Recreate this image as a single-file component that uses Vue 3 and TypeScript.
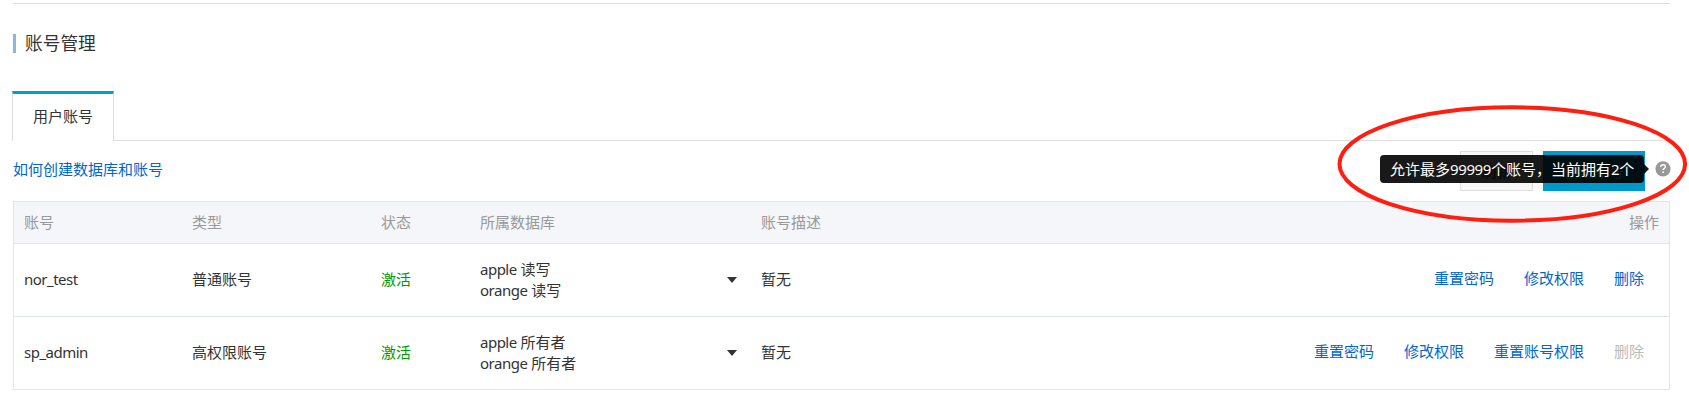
<script setup lang="ts">
interface Grant { db: string; role: string }
interface Action { label: string; disabled?: boolean }
interface Account {
  name: string
  type: string
  status: string
  grants: Grant[]
  note: string
  actions: Action[]
}

const headers: string[] = ['账号', '类型', '状态', '所属数据库', '账号描述', '操作']

const accounts: Account[] = [
  {
    name: 'nor_test',
    type: '普通账号',
    status: '激活',
    grants: [{ db: 'apple', role: '读写' }, { db: 'orange', role: '读写' }],
    note: '暂无',
    actions: [{ label: '重置密码' }, { label: '修改权限' }, { label: '删除' }],
  },
  {
    name: 'sp_admin',
    type: '高权限账号',
    status: '激活',
    grants: [{ db: 'apple', role: '所有者' }, { db: 'orange', role: '所有者' }],
    note: '暂无',
    actions: [
      { label: '重置密码' },
      { label: '修改权限' },
      { label: '重置账号权限' },
      { label: '删除', disabled: true },
    ],
  },
]
</script>

<template>
  <main class="page">
    <header class="title-row">
      <h1 class="title">账号管理</h1>
    </header>

    <nav class="tabs">
      <div class="tab">用户账号</div>
      <div class="tab-rest"></div>
    </nav>

    <section class="toolbar">
      <a class="link">如何创建数据库和账号</a>
      <div class="tools">
        <button class="btn">刷新</button>
        <button class="btn primary">创建账号</button>
        <div class="help">
          <svg class="help-icon" width="16" height="16" viewBox="0 0 16 16">
            <circle cx="8" cy="7.8" r="7.6" fill="#999" />
            <path d="M5.7 6.1C5.7 4.6 6.7 3.8 8.1 3.8C9.5 3.8 10.4 4.6 10.4 5.7C10.4 7.3 8.1 7.3 8.1 9.1" fill="none" stroke="#fff" stroke-width="1.5" />
            <rect x="7.3" y="10.4" width="1.6" height="1.6" fill="#fff" />
          </svg>
          <div class="tooltip">允许最多<span class="digits">99999</span>个账号，当前拥有<span class="digits">2</span>个</div>
        </div>
      </div>
    </section>

    <section class="table">
      <div class="row head">
        <span v-for="h in headers" :key="h" class="cell">{{ h }}</span>
      </div>
      <div v-for="a in accounts" :key="a.name" class="row">
        <span class="cell latin">{{ a.name }}</span>
        <span class="cell">{{ a.type }}</span>
        <span class="cell active">{{ a.status }}</span>
        <div class="cell dbs">
          <div>
            <div v-for="g in a.grants" :key="g.db" class="grant"><span class="latin">{{ g.db }}</span>{{ ' ' + g.role }}</div>
          </div>
          <i class="caret"></i>
        </div>
        <span class="cell">{{ a.note }}</span>
        <div class="actions">
          <a v-for="x in a.actions" :key="x.label" class="link" :class="{ disabled: x.disabled }">{{ x.label }}</a>
        </div>
      </div>
    </section>

    <svg class="marker" width="352" height="120" viewBox="0 0 352 120">
      <ellipse cx="176.3" cy="60" rx="172.8" ry="56.7" fill="none" stroke="#ff1e10" stroke-width="4" />
    </svg>
  </main>
</template>

<style>
body { margin: 0; background: #fff; }
</style>

<style scoped>
.page {
  position: relative;
  box-sizing: border-box;
  width: 1689px;
  height: 414px;
  padding: 3px 19px 0 13px;
  overflow: hidden;
  color: #333;
  font: 15px/21px "Noto Sans", "Noto Sans CJK SC", sans-serif;
}
.title-row {
  box-sizing: border-box;
  height: 88px;
  padding-top: 30px;
  border-top: 1px solid #ddd;
}
.title {
  height: 19px;
  margin: 0;
  padding-left: 9px;
  border-left: 3px solid #88b7e0;
  font-size: 17.7px;
  font-weight: 400;
  line-height: 19px;
}
.latin { letter-spacing: -0.5px; }
.digits { letter-spacing: -0.4px; }
.tabs { display: flex; height: 50px; margin-left: -1px; }
.tab {
  box-sizing: border-box;
  width: 102px;
  border: 1px solid #ddd;
  border-top: 3px solid #00a2ca;
  border-bottom: 0;
  line-height: 45px;
  text-align: center;
}
.tab-rest { flex: 1; border-bottom: 1px solid #ddd; }
.toolbar {
  display: flex;
  justify-content: space-between;
  height: 60px;
}
.link { color: #06c; line-height: 21px; white-space: nowrap; }
.toolbar > .link { margin-top: 18px; }
.tools { display: flex; height: 40px; margin: 10px -1px 0 0; }
.btn {
  box-sizing: border-box;
  width: 73px;
  height: 40px;
  margin: 0 10px 0 0;
  padding: 0;
  border: 1px solid #ddd;
  background: #f7f7f7;
  color: #333;
  font: inherit;
}
.btn.primary { width: 102px; border: 0; background: #09c; color: #fff; }
.help { position: relative; width: 16px; height: 16px; margin-top: 10px; }
.help-icon { display: block; }
.tooltip {
  position: absolute;
  top: -6px;
  right: 27px;
  box-sizing: border-box;
  width: 264px;
  height: 28px;
  padding-left: 10px;
  border-radius: 4px;
  background: rgba(0, 0, 0, 0.9);
  color: #fff;
  line-height: 28px;
  white-space: nowrap;
}
.tooltip::after {
  content: "";
  position: absolute;
  top: 9px;
  left: 100%;
  border: 5px solid transparent;
  border-right: 0;
  border-left-color: rgba(0, 0, 0, 0.9);
}
.table {
  border: 1px solid #e1e6eb;
}
.row {
  display: grid;
  grid-template-columns: 168px 189px 99px 281px 500px 1fr;
  align-items: center;
  height: 72px;
  border-top: 1px solid #e1e6eb;
}
.row.head { height: 41px; border-top: 0; background: #f5f6fa; color: #999; }
.cell { padding: 0 0 2px 10px; white-space: nowrap; }
.head .cell { padding-bottom: 0; }
.head .cell:last-child { padding-right: 10px; text-align: right; }
.active { color: #090; }
.dbs { display: flex; align-items: center; justify-content: space-between; padding: 0 24px 0 10px; margin-right: -10px; }
.caret { margin-bottom: 1px; border: 5.5px solid transparent; border-top: 6px solid #333; border-bottom: 0; }
.actions { display: flex; justify-content: flex-end; gap: 30px; padding: 0 25px 4px 0; }
.disabled { color: #bbb; }
.marker { position: absolute; top: 104px; left: 1336px; }
</style>
